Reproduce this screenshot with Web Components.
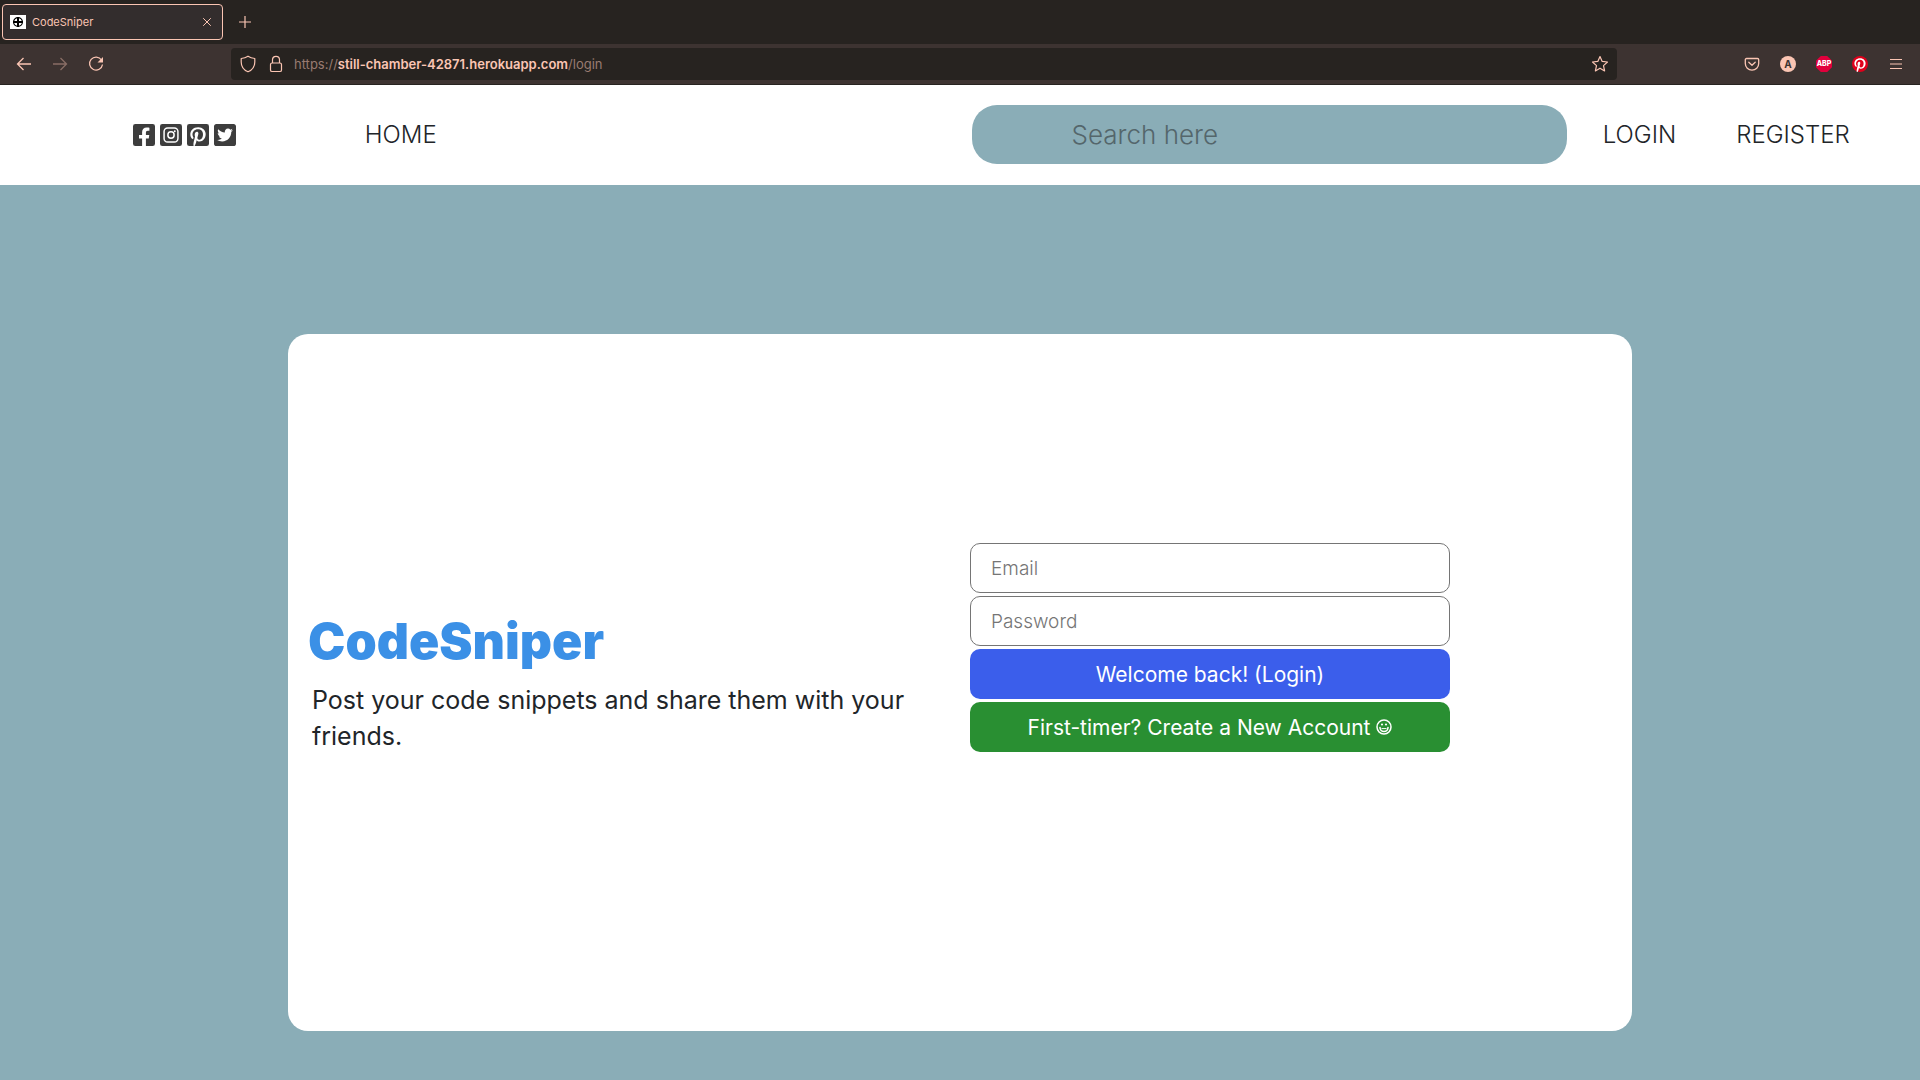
<!DOCTYPE html>
<html lang="en">
<head>
<meta charset="utf-8">
<title>CodeSniper</title>
<style>
html, body { margin: 0; min-height: 100vh; }
body { display: flex; flex-direction: column; background: #8aadb7; color: #212529; font-family: Inter, "Liberation Sans", sans-serif; }
login-page { flex: 1; }
</style>
</head>
<body>
<browser-chrome></browser-chrome>
<site-header></site-header>
<login-page></login-page>

<script>
const define = (name, html) => customElements.define(name, class extends HTMLElement {
  constructor() {
    super();
    const t = document.createElement('template');
    t.innerHTML = html;
    this.attachShadow({ mode: 'open' }).append(t.content.cloneNode(true));
  }
});

const pinterestP = 'M154.4 480c9.8-16.4 22.4-40 27.4-59.3 3-11.5 15.3-58.4 15.3-58.4 8 15.3 31.4 28.2 56.3 28.2 74.1 0 127.4-68.1 127.4-152.7 0-81.1-66.2-141.8-151.4-141.8-106 0-162.2 71.1-162.2 148.6 0 36 19.2 80.8 49.8 95.1 4.7 2.2 7.1 1.2 8.2-3.3.8-3.4 5-20.1 6.8-27.8.6-2.5.3-4.6-1.7-7-10.1-12.3-18.3-34.9-18.3-56 0-54.2 41-106.6 110.9-106.6 60.3 0 102.6 41.1 102.6 99.9 0 66.4-33.5 112.4-77.2 112.4-24.1 0-42.1-19.9-36.4-44.4 6.9-29.2 20.3-60.7 20.3-81.8 0-53-75.5-45.7-75.5 25 0 21.7 7.3 36.5 7.3 36.5-31.4 132.8-36.1 134.5-29.6 192.6l2.2.8z';

define('tool-button', `
<style>
:host { display: block; flex: none; }
button { display: flex; align-items: center; justify-content: center; width: 36px; height: 32px; padding: 0; border: 0; background: none; color: inherit; font: inherit; }
</style>
<button type="button" part="button"><slot></slot></button>`);

define('browser-tab', `
<style>
:host { display: flex; align-items: center; box-sizing: border-box; width: 221px; height: 36px; padding: 0 8px 0 7px; gap: 6px; border: 1px solid #fbc5b3; border-radius: 4px; background: #332d2d; font-size: 11px; line-height: 16px; }
.name { flex: 1; }
button { display: flex; padding: 2px; border: 0; background: none; color: inherit; }
svg { display: block; flex: none; }
</style>
<svg width="16" height="14" viewBox="0 0 16 14"><rect width="16" height="14" fill="#fff"/><circle cx="8" cy="7" r="4.4" fill="none" stroke="#000" stroke-width="1.2"/><path d="M8 2v10M3 7h10" stroke="#000" stroke-width="2"/></svg>
<span class="name"><slot></slot></span>
<button type="button" aria-label="Close tab"><svg width="10" height="10" viewBox="0 0 10 10" fill="none" stroke="currentColor"><path d="M1.2 1.2l7.6 7.6M8.8 1.2L1.2 8.8"/></svg></button>`);

define('address-bar', `
<style>
:host { display: flex; align-items: center; height: 32px; box-sizing: border-box; padding: 0 8px; border-radius: 4px; background: #272320; font-size: 13px; line-height: 18px; }
.url { flex: 1; margin-left: 11px; color: #997b71; white-space: nowrap; }
.url b { font-weight: 600; color: #fbc5b3; }
svg { display: block; margin: 0 6px 0 1px; }
svg + svg { margin: 0 0 0 7px; }
svg:last-child { margin: 0; }
</style>
<svg width="16" height="18" viewBox="0 0 16 18" fill="none" stroke="currentColor" stroke-width="1.2" stroke-linejoin="round"><path d="M8 1.2c2 1.3 4.300 2 6.800 2.300v3.500c0 4.500-2.500 8-6.800 9.800C3.700 15 1.200 11.500 1.200 7V3.500C3.700 3.200 6 2.500 8 1.200z"/></svg>
<svg width="14" height="18" viewBox="0 0 14 18" fill="none" stroke="currentColor" stroke-width="1.2"><rect x="1.500" y="8" width="11" height="8.500" rx="1.600"/><path d="M3.500 8V4.800a3.500 3.500 0 0 1 7 0V8"/></svg>
<span class="url">https://<b>still-chamber-42871.herokuapp.com</b>/login</span>
<svg width="18" height="18" viewBox="0 0 18 18" fill="none" stroke="currentColor" stroke-width="1.2" stroke-linejoin="round"><path d="M9 1.500l2.200 4.900 5.300.6-4 3.600 1.100 5.300L9 13.200l-4.600 2.700 1.100-5.300-4-3.600 5.300-.6z"/></svg>`);

define('browser-chrome', `
<style>
:host { display: block; color: #fbc5b3; background: #3d3331; border-bottom: 1px solid #272320; }
.tabs { display: flex; align-items: center; gap: 4px; height: 44px; padding-left: 2px; background: #272320; }
.bar { display: flex; align-items: center; height: 40px; padding: 0 6px; }
.space { flex: 117; }
address-bar { flex: 1370; }
.dim { opacity: .4; }
svg { display: block; }
.avatar { width: 16px; height: 16px; border-radius: 50%; background: #fbc5b3; color: #3d3331; font-size: 10px; line-height: 16px; font-weight: 700; }
.abp { width: 16px; height: 16px; background: #e1003c; clip-path: polygon(30% 0,70% 0,100% 30%,100% 70%,70% 100%,30% 100%,0 70%,0 30%); color: #fff; font-size: 7px; line-height: 16px; font-weight: 800; }
</style>
<div class="tabs">
  <browser-tab>CodeSniper</browser-tab>
  <tool-button><svg width="12" height="12" viewBox="0 0 12 12" fill="none" stroke="currentColor" stroke-width="1.2"><path d="M6 0v12M0 6h12"/></svg></tool-button>
</div>
<div class="bar">
  <tool-button><svg width="16" height="16" viewBox="0 0 16 16" fill="none" stroke="currentColor" stroke-width="1.300"><path d="M15 8H1.500M7.500 2l-6 6 6 6"/></svg></tool-button>
  <tool-button class="dim"><svg width="16" height="16" viewBox="0 0 16 16" fill="none" stroke="currentColor" stroke-width="1.300"><path d="M1 8h13.500M8.500 2l6 6-6 6"/></svg></tool-button>
  <tool-button><svg width="16" height="16" viewBox="0 0 16 16" fill="none" stroke="currentColor" stroke-width="1.300"><path d="M13.500 4A6.500 6.500 0 1 0 14.500 8.500"/><path d="M15 1v5.500H9.500z" fill="currentColor" stroke="none"/></svg></tool-button>
  <span class="space"></span>
  <address-bar></address-bar>
  <span class="space"></span>
  <tool-button><svg width="16" height="16" viewBox="0 0 16 16" fill="none" stroke="currentColor" stroke-width="1.300" stroke-linecap="round" stroke-linejoin="round"><path d="M2.500 2.500h11c.7 0 1.200.5 1.200 1.200v3.800a6.700 6.700 0 0 1-13.400 0V3.700c0-.7.5-1.200 1.200-1.200z"/><path d="M4.800 6.300L8 9.300l3.200-3"/></svg></tool-button>
  <tool-button><span class="avatar">A</span></tool-button>
  <tool-button><span class="abp">ABP</span></tool-button>
  <tool-button><svg width="16" height="16" viewBox="0 0 448 448"><circle cx="224" cy="224" r="224" fill="#e0001b"/><path transform="translate(0 -32)" fill="#fff" d="${pinterestP}"/></svg></tool-button>
  <tool-button><svg width="12" height="12" viewBox="0 0 12 12" stroke="currentColor" stroke-width="1.200"><path d="M0 1.500h12M0 6h12M0 10.500h12"/></svg></tool-button>
</div>`);

define('social-links', `
<style>
:host { display: flex; gap: 5px; }
a { display: block; color: #3d3d3d; }
svg { display: block; width: 22px; height: 22px; }
</style>
<a href="#facebook" aria-label="Facebook"><svg viewBox="0 32 448 448" fill="currentColor"><path d="M400 32H48A48 48 0 0 0 0 80v352a48 48 0 0 0 48 48h137.250V327.690h-63V256h63v-54.640c0-62.150 37-96.480 93.670-96.480 27.140 0 55.520 4.840 55.520 4.840v61h-31.270c-30.810 0-40.420 19.120-40.420 38.730V256h68.780l-11 71.690h-57.780V480H400a48 48 0 0 0 48-48V80a48 48 0 0 0-48-48z"/></svg></a>
<a href="#instagram" aria-label="Instagram"><svg viewBox="0 0 448 448"><rect width="448" height="448" rx="48" fill="currentColor"/><g fill="none" stroke="#fff" stroke-width="30"><rect x="83" y="83" width="282" height="282" rx="72"/><circle cx="224" cy="224" r="64"/></g><circle cx="301" cy="147" r="19" fill="#fff"/></svg></a>
<a href="#pinterest" aria-label="Pinterest"><svg viewBox="0 32 448 448"><rect y="32" width="448" height="448" rx="48" fill="currentColor"/><path fill="#fff" d="${pinterestP}"/></svg></a>
<a href="#twitter" aria-label="Twitter"><svg viewBox="0 32 448 448" fill="currentColor"><path d="M400 32H48C21.500 32 0 53.500 0 80v352c0 26.500 21.500 48 48 48h352c26.500 0 48-21.500 48-48V80c0-26.500-21.500-48-48-48zm-48.900 158.800c.2 2.800.2 5.700.2 8.500 0 86.700-66 186.600-186.600 186.600-37.200 0-71.700-10.800-100.700-29.400 5.300.6 10.400.8 15.800.8 30.700 0 58.900-10.400 81.400-28-28.800-.6-53-19.500-61.300-45.500 10.100 1.500 19.200 1.500 29.600-1.200-30-6.100-52.500-32.500-52.500-64.400v-.8c8.700 4.900 18.900 7.900 29.600 8.300a65.447 65.447 0 0 1-29.200-54.600c0-12.200 3.200-23.400 8.900-33.100 32.300 39.800 80.800 65.800 135.200 68.600-9.300-44.500 24-80.600 64-80.600 18.900 0 35.900 7.900 47.900 20.700 14.800-2.800 29-8.300 41.600-15.800-4.900 15.200-15.200 28-28.800 36.100 13.200-1.400 26-5.100 37.800-10.200-8.900 13.100-20.100 24.700-32.900 34z"/></svg></a>`);

define('site-header', `
<style>
:host { display: grid; grid-template-columns: 19% 1fr 31% 18.4%; align-items: center; box-sizing: border-box; height: 100px; padding-bottom: 1px; background: #fff; font-size: 24px; line-height: 36px; font-weight: 300; }
social-links { padding-left: 133px; }
a { color: #212529; text-decoration: none; }
nav { display: flex; gap: 60px; }
.account { padding-left: 36px; }
input { box-sizing: border-box; width: 100%; height: 59px; padding: 0 100px; border: 0; border-radius: 25px; background: #8aadb7; font: inherit; font-size: 26px; color: #212529; }
input::placeholder { color: #54666b; opacity: 1; }
</style>
<social-links></social-links>
<nav><a href="#home">HOME</a></nav>
<input type="search" placeholder="Search here" aria-label="Search here">
<nav class="account"><a href="#login">LOGIN</a><a href="#register">REGISTER</a></nav>`);

define('login-form', `
<style>
:host { display: block; }
form { display: flex; flex-direction: column; gap: 3px; }
input, button { box-sizing: border-box; width: 100%; height: 50px; border-radius: 10px; font: inherit; }
input { padding: 0 20px; border: 1px solid #757575; background: #fff; font-size: 19px; font-weight: 300; color: #212529; }
input::placeholder { color: #757575; opacity: 1; }
button { display: flex; align-items: center; justify-content: center; gap: 6px; border: 0; color: #fff; font-size: 21px; font-weight: 400; }
.login { background: #3b5eeb; }
.create { background: #298f32; }
</style>
<form>
  <input type="email" placeholder="Email" aria-label="Email">
  <input type="password" placeholder="Password" aria-label="Password">
  <button class="login" type="submit">Welcome back! (Login)</button>
  <button class="create" type="button">First-timer? Create a New Account <svg width="16" height="16" viewBox="0 0 16 16" fill="none" stroke="currentColor" stroke-width="1.500"><circle cx="8" cy="8" r="7"/><path d="M4 8.500a4 4 0 0 0 8 0" stroke-width="1.600" stroke-linecap="round"/><path d="M5.500 9.600h5" stroke-width="1"/><circle cx="6" cy="5.500" r="1.100" fill="currentColor" stroke="none"/><circle cx="10" cy="5.500" r="1.100" fill="currentColor" stroke="none"/></svg></button>
</form>`);

define('login-page', `
<style>
:host { display: block; }
main { display: grid; grid-template-columns: 1fr 1fr; align-items: end; box-sizing: border-box; width: 70%; margin: 149px auto 49px; padding: 209px 20px 277px; border-radius: 20px; background: #fff; }
h1 { margin: 0 0 3px; color: #3b90e6; font-size: 50px; line-height: 76px; font-weight: 900; }
p { margin: 0 20px 0 4px; font-size: 25px; line-height: 36px; }
login-form { width: 480px; max-width: 100%; margin: 0 0 2px 10px; }
</style>
<main>
  <section><h1>CodeSniper</h1><p>Post your code snippets and share them with your friends.</p></section>
  <login-form></login-form>
</main>`);
</script>
</body>
</html>
